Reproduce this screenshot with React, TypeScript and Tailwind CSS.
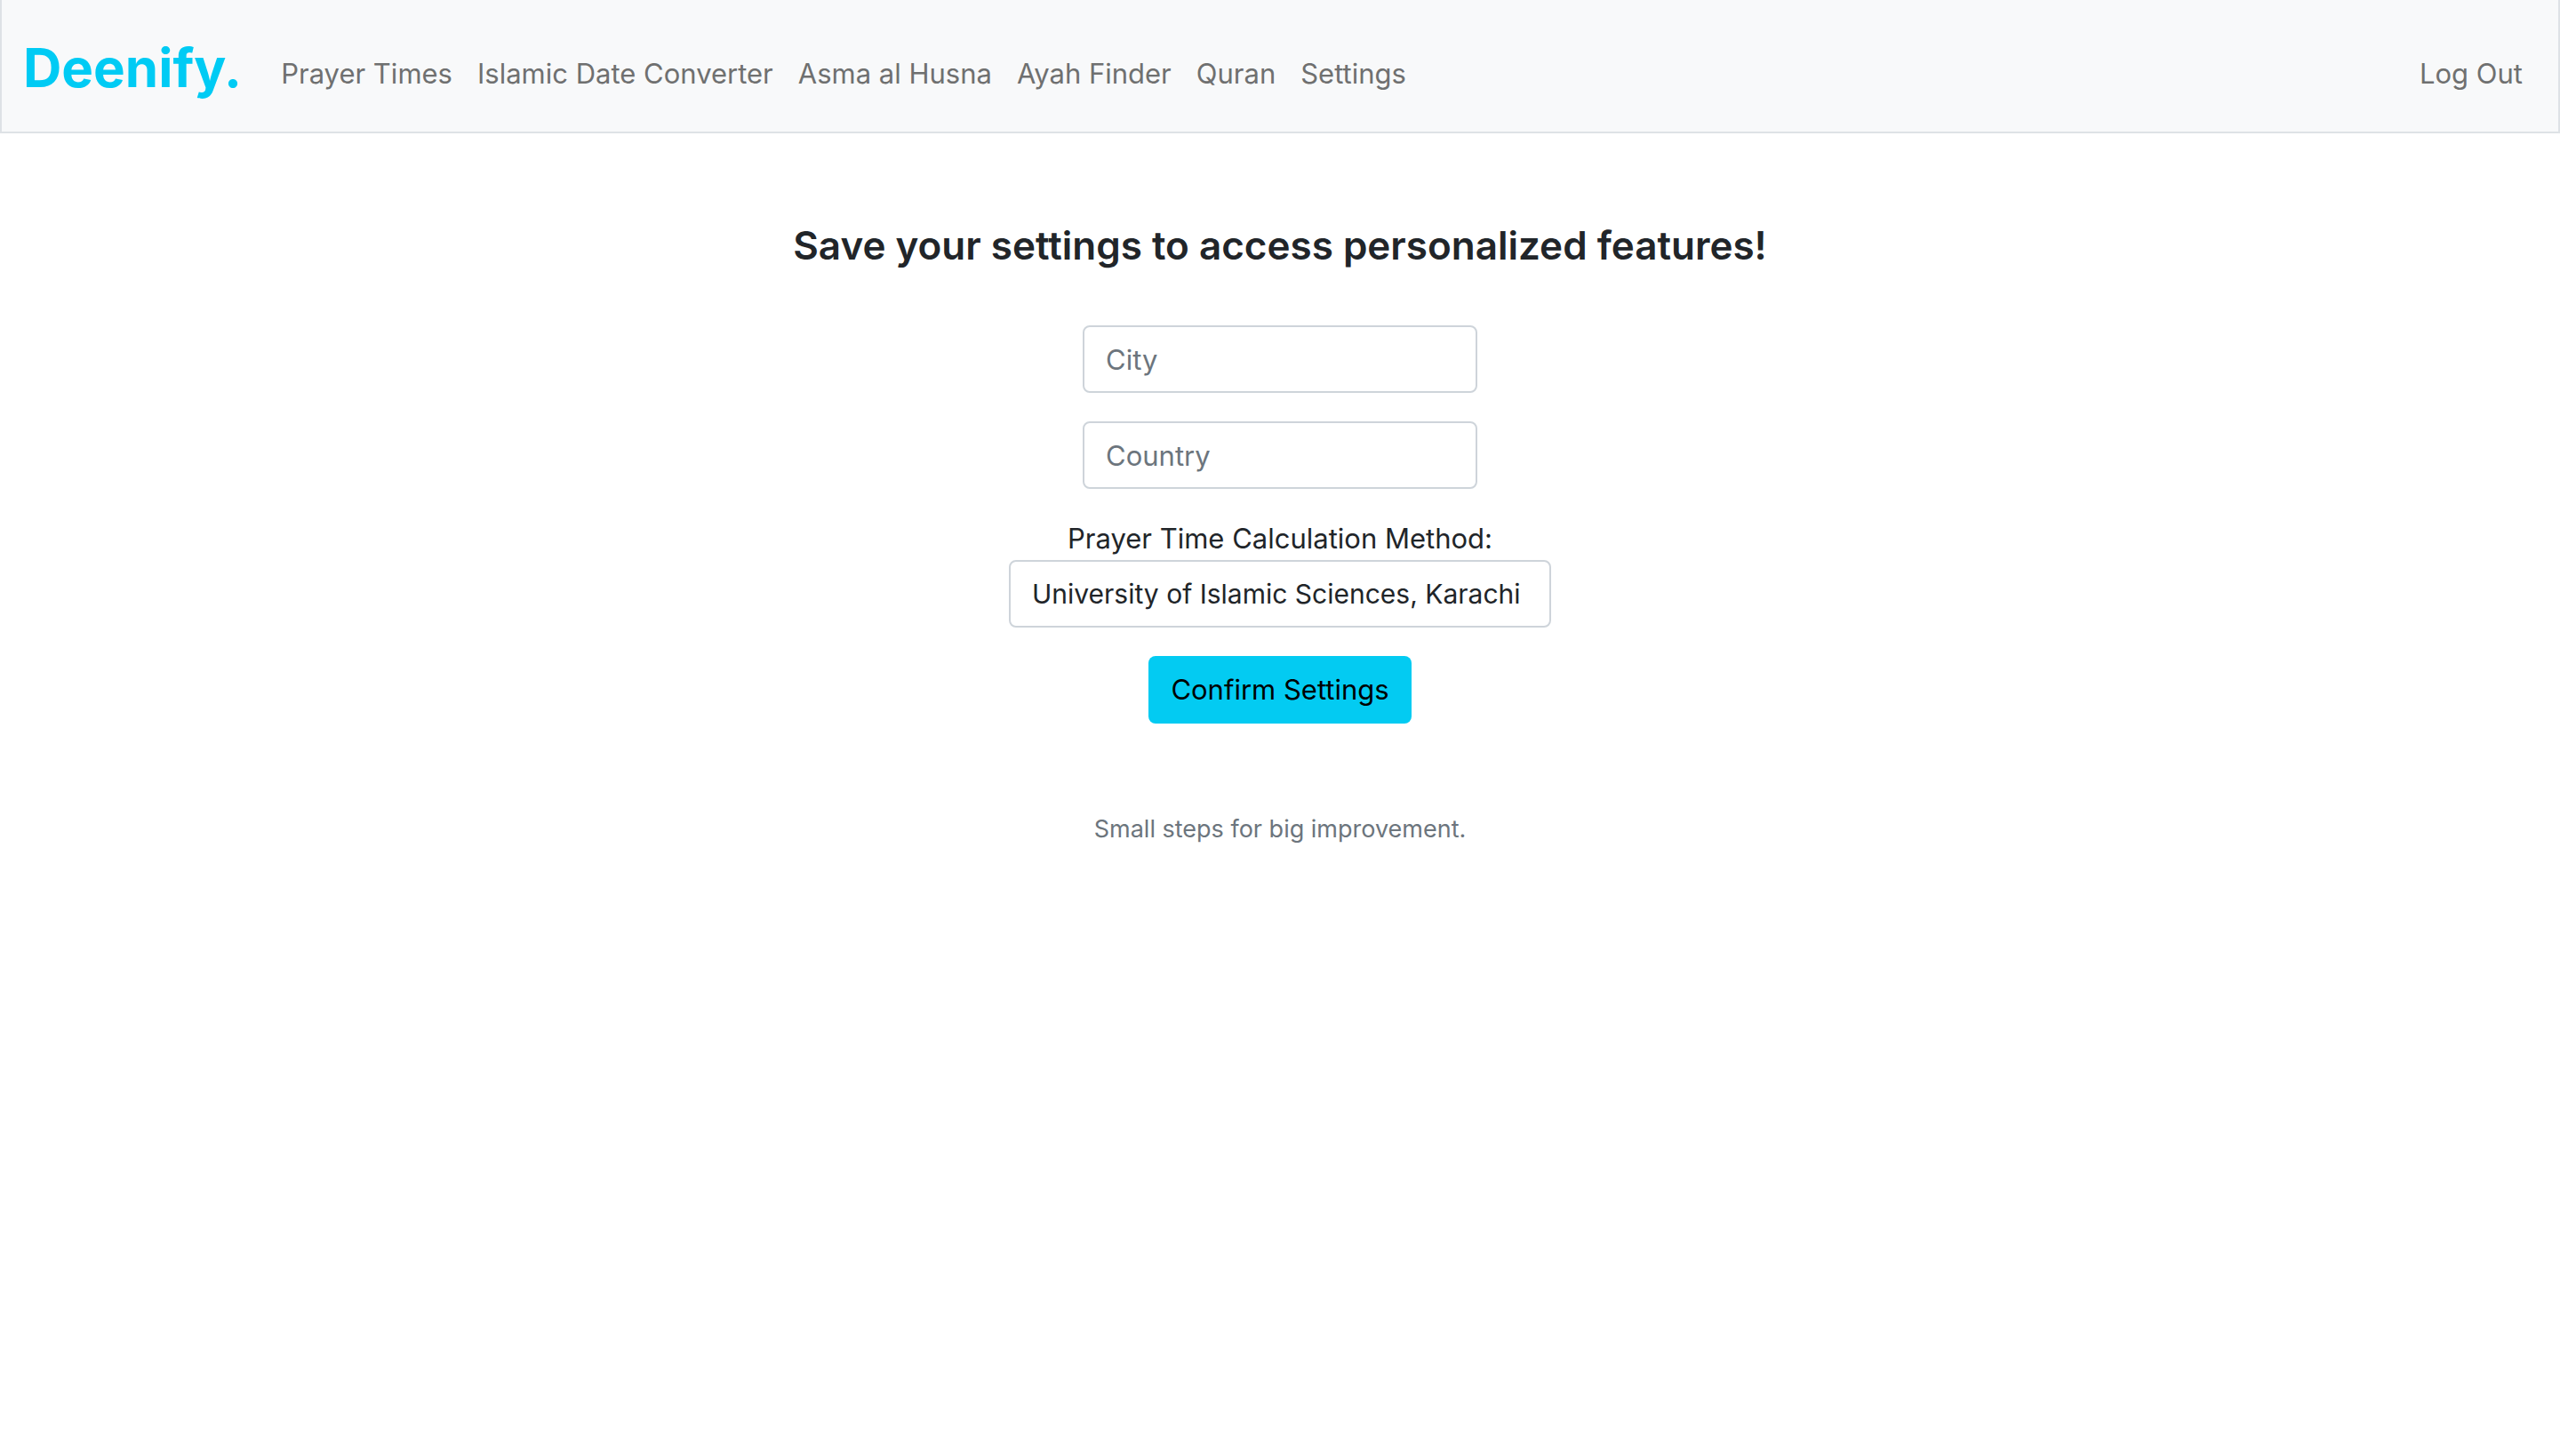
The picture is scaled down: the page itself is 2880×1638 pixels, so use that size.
const links = [
  "Prayer Times",
  "Islamic Date Converter",
  "Asma al Husna",
  "Ayah Finder",
  "Quran",
  "Settings",
];

const methods = [
  "University of Islamic Sciences, Karachi",
  "Islamic Society of North America",
  "Muslim World League",
  "Umm Al-Qura University, Makkah",
];

const field =
  "h-[76px] appearance-none rounded-lg border-2 border-[#ced4da] bg-white px-6 leading-[48px] text-[#212529] placeholder:text-[#6c757d] placeholder:opacity-100";

export default function App() {
  return (
    <div className="min-h-screen bg-white font-[Inter,sans-serif] text-[31px] leading-[48px] text-[#212529]">
      <nav className="flex items-center border-x-2 border-b-2 border-[#dee2e6] bg-[#f8f9fa] px-6 py-4 text-[#6f7070]">
        <a href="#" className="mr-8 pt-3 pb-2 text-[60px] leading-[96px] font-bold text-[#00cbf4]">
          Deenify.
        </a>
        <ul className="flex flex-1 items-center gap-7 pt-[18px] pr-4 pl-3">
          {links.map((label) => (
            <li key={label}>
              <a href="#">{label}</a>
            </li>
          ))}
          <li className="ml-auto">
            <a href="#">Log Out</a>
          </li>
        </ul>
      </nav>

      <main className="px-6 pt-[98px] text-center">
        <h1 className="text-[44px] leading-[56px] font-semibold">
          Save your settings to access personalized features!
        </h1>
        <form className="mt-[62px] flex flex-col items-center gap-8" onSubmit={(e) => e.preventDefault()}>
          <input aria-label="City" placeholder="City" className={`${field} w-[444px]`} />
          <input aria-label="Country" placeholder="Country" className={`${field} w-[444px]`} />
          <div className="flex flex-col items-center">
            <label htmlFor="method">Prayer Time Calculation Method:</label>
            <select id="method" className={`${field} w-[610px] text-[30px]`}>
              {methods.map((name) => (
                <option key={name}>{name}</option>
              ))}
            </select>
          </div>
          <button type="submit" className="h-[76px] rounded-lg bg-[#03cbf2] px-[25px] text-black">
            Confirm Settings
          </button>
        </form>
      </main>

      <footer className="mt-24 text-center text-[27px] leading-[46px] text-[#6c757d]">
        Small steps for big improvement.
      </footer>
    </div>
  );
}
